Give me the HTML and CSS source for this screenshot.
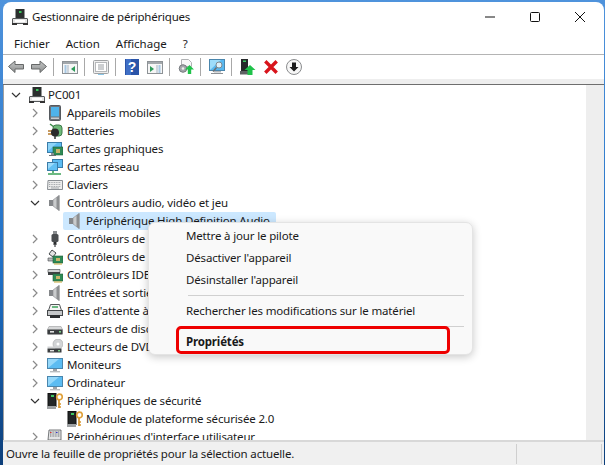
FILE: index.html
```html
<!DOCTYPE html>
<html lang="fr">
<head>
<meta charset="utf-8">
<title>Gestionnaire de périphériques</title>
<link rel="stylesheet" href="styles.css">
</head>
<body>
<svg class="defs" width="0" height="0" aria-hidden="true">
<defs>
<linearGradient id="arrow" x1="0" y1="0" x2="0" y2="1"><stop offset="0" stop-color="#c4c6c6"/><stop offset="1" stop-color="#8e9090"/></linearGradient>
<symbol id="pc" viewBox="0 0 16 16"><rect x="3.500" y="0" width="9" height="9.500" fill="#2b2f2e"/><rect x="7" y="2" width="2.500" height="2" fill="#39c65a"/><rect x=".5" y="9.500" width="15" height="5" rx=".5" fill="#e4e4e4" stroke="#55585a"/><rect x="3" y="11" width="10" height="2" fill="#fff"/><rect x="0" y="14" width="5" height="2" fill="#333"/><rect x="11" y="14" width="5" height="2" fill="#333"/></symbol>
<symbol id="mobile" viewBox="0 0 16 16"><rect x="2.500" y=".5" width="11" height="15" rx="1" fill="#6d7278" stroke="#55595e"/><rect x="4" y="2" width="8" height="9.500" fill="#4fb3ea"/><rect x="4" y="12.500" width="8" height="1.500" fill="#c8ccd0"/></symbol>
<symbol id="battery" viewBox="0 0 16 16"><path d="M3 1l4 3" stroke="#3c8d4a" stroke-width="1.500" fill="none"/><rect x="6" y="2" width="9" height="11" rx="3" fill="#6fbb7a" stroke="#3e7a4b"/><path d="M1 8h5M1 11h5" stroke="#b57a2c" stroke-width="1.400"/><circle cx="8" cy="9.500" r="4" fill="#2a2a2a"/><path d="M8 13v3" stroke="#333" stroke-width="1.500"/></symbol>
<symbol id="gpu" viewBox="0 0 16 16"><rect x=".5" y="1.500" width="14" height="10" fill="#5cbcf2" stroke="#3a7ca8"/><path d="M1 10l9-8H1z" fill="#8ed4f8"/><rect x="6" y="6" width="10" height="8" fill="#2f8a55" stroke="#1f5f3b" stroke-width=".6"/><rect x="9" y="8" width="4" height="4" fill="#c8b46a"/><rect x="4" y="12" width="3" height="2" fill="#8a8f94"/><rect x="2" y="14" width="7" height="1" fill="#6a6f74"/></symbol>
<symbol id="net" viewBox="0 0 16 16"><rect x="5.500" y=".5" width="10" height="8" fill="#5cbcf2" stroke="#3a7ca8"/><rect x=".5" y="3.500" width="10" height="8" fill="#62c0f3" stroke="#3a7ca8"/><path d="M1 10l7-6H1z" fill="#9bdafa"/><path d="M6 12v2M1 15h13" stroke="#3da35a" stroke-width="1.600"/></symbol>
<symbol id="kbd" viewBox="0 0 16 16"><path d="M1 3.500h14.500v9H.5z" fill="#ececec" stroke="#8a8f94"/><path d="M2 5.500h12M2 7.500h12M2 9.500h12" stroke="#a3a7ab" stroke-dasharray="1 .7"/><path d="M4 11h8" stroke="#a3a7ab"/></symbol>
<symbol id="spk" viewBox="0 0 16 16"><path d="M2 5h4v6H2z" fill="#84878a"/><path d="M6 5l6-4.500v15L6 11z" fill="#c9cbcc" stroke="#8a8c8e" stroke-width=".6"/><path d="M9.500 2.500l3-2.500v16l-3-2.500z" fill="#8d8f91"/></symbol>
<symbol id="usb" viewBox="0 0 16 16"><rect x="6" y="0" width="4" height="4" fill="#8a8d90"/><rect x="4.500" y="3" width="7" height="8" rx="1.500" fill="#4a4d50"/><rect x="6.500" y="11" width="3" height="3" fill="#2b2d2f"/><rect x="7.300" y="13" width="1.400" height="3" fill="#5a5c5e"/></symbol>
<symbol id="stor" viewBox="0 0 16 16"><path d="M5 1l4 3-3 4-4-3z" fill="#e4e4e4" stroke="#44484a"/><path d="M1 9h7v3H1z" fill="#b8babc" stroke="#44484a" stroke-width=".6"/><rect x="6" y="7" width="10" height="7" fill="#2f8a55" stroke="#1f5f3b" stroke-width=".6"/><rect x="9" y="9" width="4" height="3" fill="#c8b46a"/><path d="M7 15h8" stroke="#c8a838"/></symbol>
<symbol id="ide" viewBox="0 0 16 16"><path d="M1 2.500h12v3H1z" fill="#cfd1d3" stroke="#55585a" stroke-width=".7"/><rect x="1" y="5" width="12" height="3" fill="#3e4143"/><rect x="6" y="7" width="10" height="7" fill="#2f8a55" stroke="#1f5f3b" stroke-width=".6"/><rect x="9" y="9" width="4" height="3" fill="#c8b46a"/><path d="M7 15h8" stroke="#c8a838"/></symbol>
<symbol id="prn" viewBox="0 0 16 16"><path d="M3.500 1.500h9l2 6h-13z" fill="#f4f4f4" stroke="#55585a"/><path d="M5 4h6" stroke="#3da35a" stroke-width="1.500"/><rect x=".5" y="7.500" width="15" height="5" fill="#c6c8ca" stroke="#44474a"/><rect x="3" y="12" width="10" height="3" fill="#2d2f31"/></symbol>
<symbol id="hdd" viewBox="0 0 16 16"><path d="M2 5.500h12l1.500 3v4H.5v-4z" fill="#d7d8d9" stroke="#9a9c9e" stroke-width=".6"/><rect x=".5" y="8.500" width="15" height="5" fill="#3a3d3f"/><rect x="3" y="10" width="4" height="1.600" fill="#e0e0e0"/><rect x="12" y="10" width="2" height="1.600" fill="#7bd088"/></symbol>
<symbol id="dvd" viewBox="0 0 16 16"><circle cx="11" cy="5" r="5" fill="#d2d4d6" stroke="#a4a6a8" stroke-width=".6"/><circle cx="11" cy="5" r="1.500" fill="#fff"/><rect x=".5" y="7.500" width="14" height="2" fill="#cfd1d3"/><rect x=".5" y="9.500" width="14" height="4" fill="#3a3d3f"/><rect x="3" y="11" width="4" height="1.400" fill="#e0e0e0"/><rect x="11" y="11" width="2" height="1.400" fill="#7bd088"/></symbol>
<symbol id="mon" viewBox="0 0 16 16"><rect x=".5" y="1.500" width="15" height="10" fill="#5cbcf2" stroke="#4a86ad"/><path d="M1 11L12 2H1z" fill="#96d8fa"/><rect x="6" y="12" width="4" height="2" fill="#9ea2a6"/><rect x="3" y="14" width="10" height="1.400" fill="#babdc0"/></symbol>
<symbol id="sec" viewBox="0 0 16 16"><rect x="1" y=".5" width="8" height="13" fill="#232627" stroke="#111"/><rect x="4" y="2" width="3" height="2" fill="#3dc860"/><rect x="0" y="13" width="9" height="3" fill="#9ea1a3"/><circle cx="12.500" cy="4" r="2.800" fill="#fff" stroke="#e0a13a" stroke-width="1.700"/><path d="M12 7v8M12 11h2M12 14h2" stroke="#d8962e" stroke-width="1.700"/></symbol>
<symbol id="hid" viewBox="0 0 16 16"><path d="M2 1h12v10H1z" fill="#e4e5e6" stroke="#55585a" stroke-width=".8"/><path d="M3 3h10M3 5h10M3 7h10" stroke="#6c7074" stroke-dasharray="1 .6"/><rect x="3" y="3" width="1.500" height="1" fill="#d33"/><rect x="9" y="3" width="1.500" height="1" fill="#33c"/></symbol>
<symbol id="back" viewBox="0 0 16 16"><path d="M.5 7.500L7 2v3.500h8.500v4.500H7v3.500z" fill="url(#arrow)" stroke="#666868"/></symbol>
<symbol id="fwd" viewBox="0 0 16 16"><path d="M15.500 7.500L9 2v3.500H.5v4.500H9v3.500z" fill="url(#arrow)" stroke="#666868"/></symbol>
<symbol id="panel1" viewBox="0 0 16 16"><rect x=".5" y="2.500" width="15" height="12" fill="#f6f6f6" stroke="#8d9296"/><rect x="1" y="3" width="14" height="2" fill="#a3a8ac"/><path d="M6 6v8" stroke="#a6b4c2"/><path d="M2.500 7h2M2.500 9h2M2.500 11h2M2.500 13h2" stroke="#5a9bd0"/><path d="M13 7v6l-4-3z" fill="#2d9b5a"/></symbol>
<symbol id="panel2" viewBox="0 0 16 16"><rect x=".5" y="1.500" width="15" height="13" rx="1" fill="#eeeeee" stroke="#a0a2a4"/><rect x="2.500" y="3.500" width="11" height="9" fill="#fff" stroke="#b6b8ba"/><path d="M5 6h6M5 8h6M5 10h6" stroke="#9a9ea2"/><path d="M5 15.500h6" stroke="#8ac6e6"/></symbol>
<symbol id="help" viewBox="0 0 14 16"><rect width="14" height="16" fill="#2a54a8"/><rect x="1" y="0" width="5" height="16" fill="#3f6fc6"/><text x="7" y="13" text-anchor="middle" class="helpq">?</text></symbol>
<symbol id="panel3" viewBox="0 0 16 16"><rect x=".5" y="2.500" width="15" height="12" fill="#f6f6f6" stroke="#8d9296"/><rect x="1" y="3" width="14" height="2" fill="#a3a8ac"/><path d="M10 6v8" stroke="#a6b4c2"/><path d="M11.500 7h2M11.500 9h2M11.500 11h2M11.500 13h2" stroke="#5a9bd0"/><path d="M3 7v6l4-3z" fill="#2d9b5a"/></symbol>
<symbol id="update" viewBox="0 0 16 16"><path d="M3.500.5h7l3 3v4h-10z" fill="#f7f7f7" stroke="#b0b2b4"/><circle cx="5" cy="9.500" r="3.800" fill="#a2a6aa" stroke="#777b7f"/><circle cx="5" cy="9.500" r="1.300" fill="#eee"/><path d="M11.500 6l4.500 4.500h-2.800V15H9.800v-4.500H7z" fill="#1fc24a"/></symbol>
<symbol id="scan" viewBox="0 0 16 16"><rect x=".5" y=".5" width="15" height="11" fill="#58b8f0" stroke="#4a86ad"/><path d="M1 11L12 1H1z" fill="#9ddcfa"/><circle cx="10" cy="6" r="3" fill="#dcf0fa" stroke="#7f8a90"/><path d="M7.500 8.500L4 12.500" stroke="#6a6f72" stroke-width="1.500"/><rect x="5" y="12" width="7" height="1.500" fill="#b2b6ba"/><rect x="2" y="14" width="12" height="1" fill="#8c9094"/></symbol>
<symbol id="addpc" viewBox="0 0 16 16"><rect x="1" y="0" width="7" height="12" fill="#25292a"/><rect x="3" y="1.500" width="3" height="1.500" fill="#3dc860"/><rect x="0" y="12" width="9" height="3.500" fill="#5e6264"/><path d="M10 6l5.500 5H12.500v5H7.500v-5H4.500z" fill="#1fc24a"/></symbol>
<symbol id="del" viewBox="0 0 16 16"><path d="M3.500 3.500l9 9M12.500 3.500l-9 9" stroke="#d8141c" stroke-width="3.400" stroke-linecap="square"/></symbol>
<symbol id="down" viewBox="0 0 16 16"><circle cx="8" cy="8" r="7.500" fill="#f6f6f6" stroke="#8a8c8e"/><path d="M6 3.500h4V8h2.500L8 12.500 3.500 8H6z" fill="#1a1a1a"/></symbol>
<symbol id="chev-r" viewBox="0 0 10 10"><path d="M3 1l4 4-4 4" fill="none" stroke="#8a8a8a" stroke-width="1.200"/></symbol>
<symbol id="chev-d" viewBox="0 0 10 10"><path d="M1 3l4 4 4-4" fill="none" stroke="#333" stroke-width="1.200"/></symbol>
</defs>
</svg>

<main class="window">
  <header class="titlebar">
    <svg class="title-icon"><use href="#pc"/></svg>
    <span class="title">Gestionnaire de périphériques</span>
    <div class="controls">
      <svg class="ctl" viewBox="0 0 12 12"><path d="M1 6h10" stroke="#111"/></svg>
      <svg class="ctl" viewBox="0 0 12 12"><rect x="1.500" y="1.500" width="9" height="9" rx="1" fill="none" stroke="#111"/></svg>
      <svg class="ctl" viewBox="0 0 12 12"><path d="M1 1l10 10M11 1L1 11" stroke="#111"/></svg>
    </div>
  </header>
  <nav class="menubar"><span>Fichier</span><span>Action</span><span>Affichage</span><span>?</span></nav>
  <div class="toolbar">
    <svg class="tb"><use href="#back"/></svg>
    <svg class="tb"><use href="#fwd"/></svg>
    <i class="sep"></i>
    <svg class="tb"><use href="#panel1"/></svg>
    <i class="sep"></i>
    <svg class="tb"><use href="#panel2"/></svg>
    <i class="sep"></i>
    <svg class="tb"><use href="#help"/></svg>
    <svg class="tb"><use href="#panel3"/></svg>
    <i class="sep"></i>
    <svg class="tb"><use href="#update"/></svg>
    <i class="sep"></i>
    <svg class="tb"><use href="#scan"/></svg>
    <i class="sep"></i>
    <svg class="tb"><use href="#addpc"/></svg>
    <svg class="tb"><use href="#del"/></svg>
    <svg class="tb"><use href="#down"/></svg>
  </div>
  <div class="strip"></div>
  <section class="content">
    <div class="tree">
      <div class="row l0"><svg class="chev"><use href="#chev-d"/></svg><svg class="ico"><use href="#pc"/></svg><span>PC001</span></div>
      <div class="row l1"><svg class="chev"><use href="#chev-r"/></svg><svg class="ico"><use href="#mobile"/></svg><span>Appareils mobiles</span></div>
      <div class="row l1"><svg class="chev"><use href="#chev-r"/></svg><svg class="ico"><use href="#battery"/></svg><span>Batteries</span></div>
      <div class="row l1"><svg class="chev"><use href="#chev-r"/></svg><svg class="ico"><use href="#gpu"/></svg><span>Cartes graphiques</span></div>
      <div class="row l1"><svg class="chev"><use href="#chev-r"/></svg><svg class="ico"><use href="#net"/></svg><span>Cartes réseau</span></div>
      <div class="row l1"><svg class="chev"><use href="#chev-r"/></svg><svg class="ico"><use href="#kbd"/></svg><span>Claviers</span></div>
      <div class="row l1"><svg class="chev"><use href="#chev-d"/></svg><svg class="ico"><use href="#spk"/></svg><span>Contrôleurs audio, vidéo et jeu</span></div>
      <div class="row l2"><div class="leaf selected"><svg class="ico"><use href="#spk"/></svg><span>Périphérique High Definition Audio</span></div></div>
      <div class="row l1"><svg class="chev"><use href="#chev-r"/></svg><svg class="ico"><use href="#usb"/></svg><span>Contrôleurs de</span></div>
      <div class="row l1"><svg class="chev"><use href="#chev-r"/></svg><svg class="ico"><use href="#stor"/></svg><span>Contrôleurs de</span></div>
      <div class="row l1"><svg class="chev"><use href="#chev-r"/></svg><svg class="ico"><use href="#ide"/></svg><span>Contrôleurs IDE</span></div>
      <div class="row l1"><svg class="chev"><use href="#chev-r"/></svg><svg class="ico"><use href="#spk"/></svg><span>Entrées et sortie</span></div>
      <div class="row l1"><svg class="chev"><use href="#chev-r"/></svg><svg class="ico"><use href="#prn"/></svg><span>Files d'attente à</span></div>
      <div class="row l1"><svg class="chev"><use href="#chev-r"/></svg><svg class="ico"><use href="#hdd"/></svg><span>Lecteurs de disc</span></div>
      <div class="row l1"><svg class="chev"><use href="#chev-r"/></svg><svg class="ico"><use href="#dvd"/></svg><span>Lecteurs de DVD</span></div>
      <div class="row l1"><svg class="chev"><use href="#chev-r"/></svg><svg class="ico"><use href="#mon"/></svg><span>Moniteurs</span></div>
      <div class="row l1"><svg class="chev"><use href="#chev-r"/></svg><svg class="ico"><use href="#mon"/></svg><span>Ordinateur</span></div>
      <div class="row l1"><svg class="chev"><use href="#chev-d"/></svg><svg class="ico"><use href="#sec"/></svg><span>Périphériques de sécurité</span></div>
      <div class="row l2"><div class="leaf"><svg class="ico"><use href="#sec"/></svg><span>Module de plateforme sécurisée 2.0</span></div></div>
      <div class="row l1"><svg class="chev"><use href="#chev-r"/></svg><svg class="ico"><use href="#hid"/></svg><span>Périphériques d'interface utilisateur</span></div>
    </div>
    <div class="scrollbar"></div>
    <div class="menu">
      <div class="item">Mettre à jour le pilote</div>
      <div class="item">Désactiver l'appareil</div>
      <div class="item">Désinstaller l'appareil</div>
      <hr class="menusep">
      <div class="item">Rechercher les modifications sur le matériel</div>
      <hr class="menusep">
      <div class="item bold">Propriétés</div>
      <div class="highlight"></div>
    </div>
  </section>
  <footer class="status">
    <span class="status-main">Ouvre la feuille de propriétés pour la sélection actuelle.</span>
    <span class="status-cell"></span>
    <span class="status-end"></span>
  </footer>
</main>
</body>
</html>
```
FILE: styles.css
```css
html, body { margin: 0; height: 100%; }
body {
  width: 605px; height: 465px; overflow: hidden;
  background: linear-gradient(180deg, #4f93dc 0, #1f6fc4 60%, #0d3f7a 100%);
  font: 11.5px/16px "Noto Sans", sans-serif;
  letter-spacing: -.16px;
  color: #1a1a1a;
}
.defs { position: absolute; }
svg { display: block; flex: none; }
.helpq { font: bold 14px "Liberation Sans", sans-serif; fill: #fff; }
.window {
  margin: 2px 1px 0 3px; height: 463px;
  display: flex; flex-direction: column;
  background: #fff; border-radius: 8px 8px 0 0; overflow: hidden;
}
.titlebar { height: 30px; display: flex; align-items: center; padding-left: 9px; flex: none; }
.title-icon { width: 16px; height: 16px; margin-right: 4px; }
.title { flex: 1; letter-spacing: -.22px; }
.controls { display: flex; }
.ctl { width: 12px; height: 12px; margin-right: 33px; }
.controls .ctl:last-child { margin-right: 18px; }
.menubar {
  height: 23px; box-sizing: border-box; flex: none;
  display: flex; gap: 16px; align-items: center;
  padding: 1px 0 0 11px;
  letter-spacing: 0;
  border-bottom: 1px solid #b4b4b4;
}
.toolbar { height: 24px; display: flex; gap: 7px; align-items: center; padding-left: 5px; flex: none; background: #fff; }
.tb { width: 16px; height: 16px; }
.sep { width: 1px; height: 18px; margin: 0 1px 0 -1px; background: #a8a8a8; }
.strip { height: 5px; flex: none; background: #eeeeee; border-bottom: 1px solid #6e6e6e; }
.content { position: relative; flex: 1; min-height: 0; display: flex; border-bottom: 2px solid #d8d8d8; overflow: hidden; }
.tree { flex: 1; padding-top: 1px; overflow: hidden; border-left: 1px solid #a0a0a0; }
.scrollbar { width: 18px; background: #eeeeee; }
.row { height: 18px; display: flex; align-items: center; white-space: nowrap; }
.chev { width: 10px; height: 10px; margin-right: 4px; }
.ico { width: 16px; height: 16px; margin-right: 3px; }
.l0 { padding-left: 7px; }
.l1 { padding-left: 26px; }
.l2 { padding-left: 59px; }
.l0 .chev { margin-right: 8px; }
.l1 .chev { margin-right: 7px; }
.l1 span { padding-left: 1px; }
.leaf { height: 18px; display: flex; align-items: center; padding: 0 6px 0 4px; }
.selected { background: #cce8ff; border-radius: 2px; }
.menu {
  position: absolute; left: 145px; top: 137px; width: 325px; height: 133px;
  box-sizing: border-box; padding-top: 2px;
  background: #f9f9f9; border: 1px solid #e4e4e4; border-radius: 7px;
  box-shadow: 0 2px 8px rgba(0,0,0,.22);
}
.item { height: 22px; line-height: 22px; padding-left: 37px; }
.bold { font-weight: 700; }
.menusep { height: 1px; border: 0; margin: 4px 8px 4px 39px; background: #d0d0d0; }
.highlight {
  position: absolute; left: 27px; top: 103px; width: 268px; height: 22px;
  border: 3px solid #ee0000; border-radius: 5px;
}
.status { height: 22px; flex: none; display: flex; align-items: center; background: #f0f0f0; padding: 1px 0 0 3px; }
.status-main { width: 510px; border-right: 1px solid #cfcfcf; line-height: 20px; }
.status-cell { width: 84px; height: 20px; border-right: 1px solid #cfcfcf; }
.status-end { flex: 1; }
```
